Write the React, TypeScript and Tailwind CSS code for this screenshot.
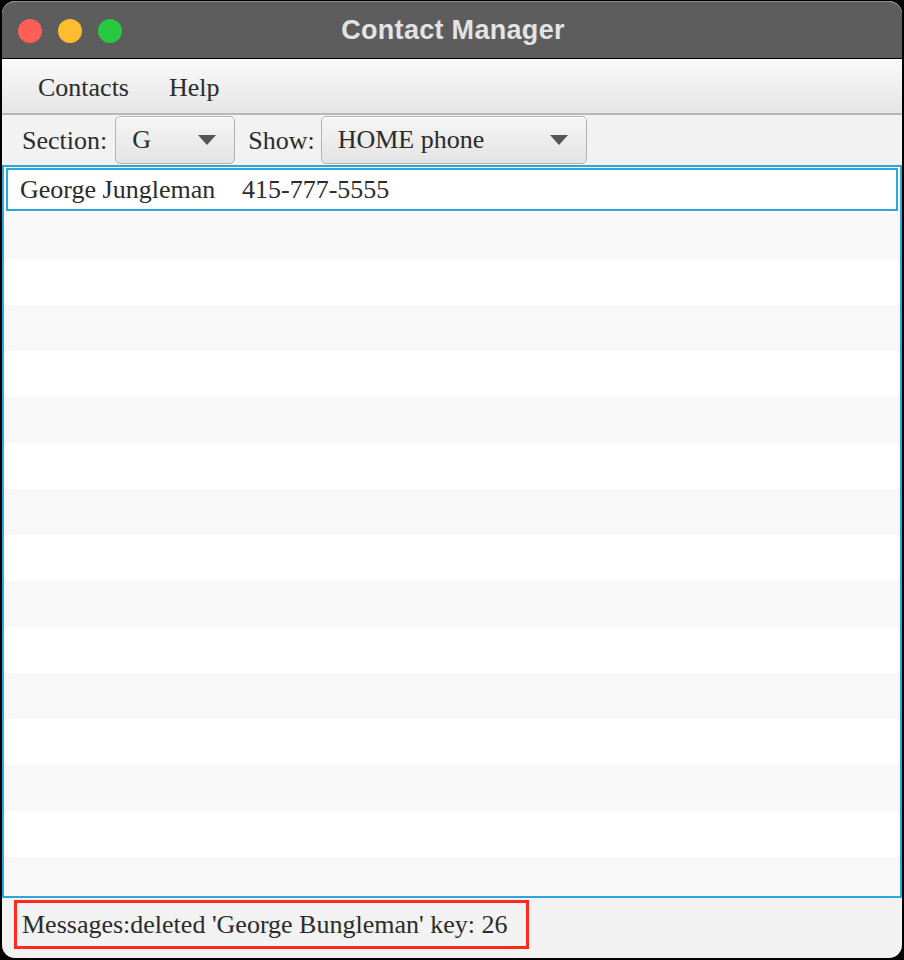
// Contact Manager window mock

const serif = { fontFamily: '"Liberation Serif", "Times New Roman", serif' };

const Combo = ({ value, width }: { value: string; width: string }) => (
  <div
    className={`${width} h-[48px] flex items-center justify-between pl-[16px] pr-[18px] rounded-[5px] border border-[#b3b3b3] bg-gradient-to-b from-[#f5f5f5] to-[#e4e4e4] shadow-[inset_0_1px_0_#ffffff]`}
  >
    <span className="text-[26px] text-[#2b2b2b] leading-none">{value}</span>
    <svg width="18" height="10" viewBox="0 0 18 10">
      <path d="M0 0 L18 0 L9 10 Z" fill="#555555" />
    </svg>
  </div>
);

export default function App() {
  const rows = Array.from({ length: 16 }, (_, i) => i);

  return (
    <div className="w-[904px] h-[960px] bg-black pt-[1px] pl-[2px]" style={serif}>
      <div className="w-[900px] h-[957px] rounded-[13px] overflow-hidden flex flex-col bg-[#f2f2f2]">
        {/* title bar */}
        <div className="h-[58px] shrink-0 bg-[#5d5d5d] border-t border-[#8a8a8a] rounded-t-[13px] relative flex items-center justify-center border-b border-b-black">
          <div className="absolute left-[16px] top-[17px] flex gap-[16px]">
            <span className="w-[24px] h-[24px] rounded-full bg-[#ff5f57]" />
            <span className="w-[24px] h-[24px] rounded-full bg-[#febc2e]" />
            <span className="w-[24px] h-[24px] rounded-full bg-[#28c840]" />
          </div>
          <span
            className="text-[27px] font-bold text-[#e3e3e3] tracking-[0.3px] pl-[2px]"
            style={{ fontFamily: '"Liberation Sans", Arial, sans-serif' }}
          >
            Contact Manager
          </span>
        </div>

        {/* menu bar */}
        <div className="h-[56px] shrink-0 bg-gradient-to-b from-[#f9f9f9] to-[#e5e5e5] border-b-2 border-[#b8b8b8] flex items-center gap-[40px] pl-[36px] pt-[2px] text-[26px] text-[#2b2b2b]">
          <span>Contacts</span>
          <span>Help</span>
        </div>

        {/* toolbar */}
        <div className="h-[50px] shrink-0 flex items-center pl-[20px] text-[26px] text-[#2b2b2b]">
          <span className="mr-[8px]">Section:</span>
          <Combo value="G" width="w-[120px]" />
          <span className="ml-[13px] mr-[6px]">Show:</span>
          <Combo value="HOME phone" width="w-[266px]" />
        </div>

        {/* list */}
        <div className="h-[733px] shrink-0 border-2 border-[#2fa6d8] overflow-hidden bg-white">
          {rows.map((i) => (
            <div
              key={i}
              className={`h-[46px] ${i % 2 === 1 ? 'bg-[#f8f8f8]' : 'bg-white'} ${i === 0 ? 'px-[2px] pt-[1px] pb-[2px]' : ''}`}
            >
              {i === 0 && (
                <div className="h-full border-2 border-[#2fa6d8] flex items-center pl-[12px] text-[26px] text-[#2b2b2b]">
                  <span className="w-[222px]">George Jungleman</span>
                  <span>415-777-5555</span>
                </div>
              )}
            </div>
          ))}
        </div>

        {/* status bar */}
        <div className="flex-1 pl-[12px] pt-[2px]">
          <div className="w-[515px] h-[49px] border-[3px] border-[#ff2a1d] flex items-center pl-[5px] text-[26px] text-[#2b2b2b]">
            Messages:deleted 'George Bungleman' key: 26
          </div>
        </div>
      </div>
    </div>
  );
}
